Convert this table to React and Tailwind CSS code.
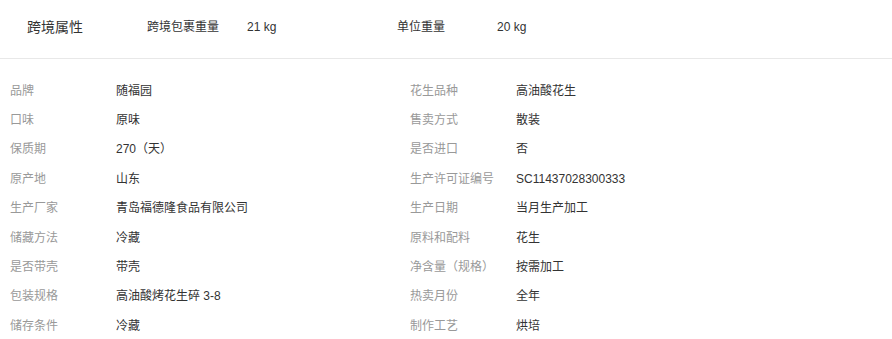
import React from "react";

const font = {
  fontFamily: '"Liberation Sans", "Noto Sans CJK SC", sans-serif',
};

const left = [
  ["品牌", "随福园"],
  ["口味", "原味"],
  ["保质期", "270（天）"],
  ["原产地", "山东"],
  ["生产厂家", "青岛福德隆食品有限公司"],
  ["储藏方法", "冷藏"],
  ["是否带壳", "带壳"],
  ["包装规格", "高油酸烤花生碎 3-8"],
  ["储存条件", "冷藏"],
];

const right = [
  ["花生品种", "高油酸花生"],
  ["售卖方式", "散装"],
  ["是否进口", "否"],
  ["生产许可证编号", "SC11437028300333"],
  ["生产日期", "当月生产加工"],
  ["原料和配料", "花生"],
  ["净含量（规格）", "按需加工"],
  ["热卖月份", "全年"],
  ["制作工艺", "烘培"],
];

function Row({ label, value }) {
  return (
    <div className="flex h-[29.4px] items-center text-[12px] leading-[18px]">
      <span className="w-[106px] shrink-0 text-[#999999]">{label}</span>
      <span className="text-[#333333]">{value}</span>
    </div>
  );
}

export default function App() {
  return (
    <div className="w-[892px] h-[339px] overflow-hidden bg-white" style={font}>
      <div className="flex h-[59px] items-center border-b border-[#e8e8e8] pb-[4px] pl-[27px]">
        <span className="w-[120px] text-[14px] text-[#333333]">跨境属性</span>
        <div className="flex w-[250px] text-[12px] text-[#333333]">
          <span className="w-[100px]">跨境包裹重量</span>
          <span>21 kg</span>
        </div>
        <div className="flex text-[12px] text-[#333333]">
          <span className="w-[100px]">单位重量</span>
          <span>20 kg</span>
        </div>
      </div>
      <div className="flex pl-[10px] pt-[17px]">
        <div className="w-[400px]">
          {left.map(([l, v]) => (
            <Row key={l} label={l} value={v} />
          ))}
        </div>
        <div>
          {right.map(([l, v]) => (
            <Row key={l} label={l} value={v} />
          ))}
        </div>
      </div>
    </div>
  );
}
